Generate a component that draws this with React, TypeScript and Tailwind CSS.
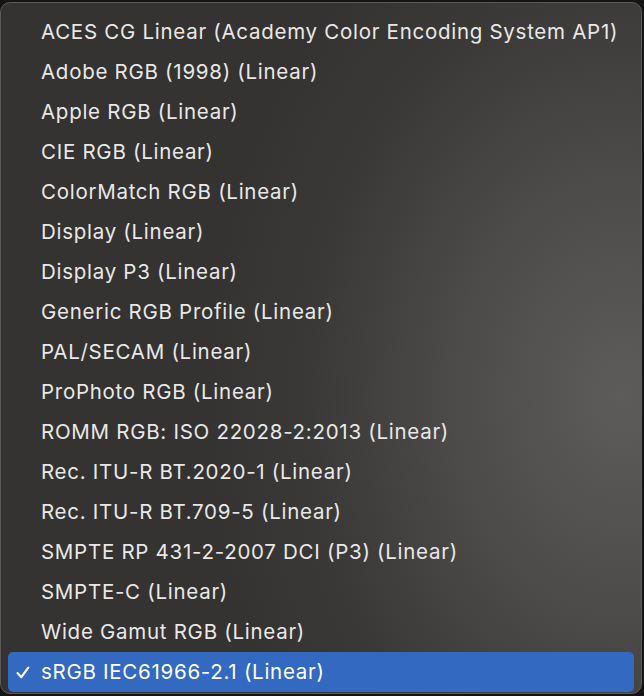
import React from "react";

const profiles = [
  "ACES CG Linear (Academy Color Encoding System AP1)",
  "Adobe RGB (1998) (Linear)",
  "Apple RGB (Linear)",
  "CIE RGB (Linear)",
  "ColorMatch RGB (Linear)",
  "Display (Linear)",
  "Display P3 (Linear)",
  "Generic RGB Profile (Linear)",
  "PAL/SECAM (Linear)",
  "ProPhoto RGB (Linear)",
  "ROMM RGB: ISO 22028-2:2013 (Linear)",
  "Rec. ITU-R BT.2020-1 (Linear)",
  "Rec. ITU-R BT.709-5 (Linear)",
  "SMPTE RP 431-2-2007 DCI (P3) (Linear)",
  "SMPTE-C (Linear)",
  "Wide Gamut RGB (Linear)",
  "sRGB IEC61966-2.1 (Linear)",
];

const selected = "sRGB IEC61966-2.1 (Linear)";

function Check() {
  return (
    <svg width="14" height="13" viewBox="0 0 14 13" fill="none">
      <path
        d="M1.5 7 L5.3 11.2 L12.3 1.6"
        stroke="#ffffff"
        strokeWidth="2.1"
        strokeLinecap="round"
        strokeLinejoin="round"
      />
    </svg>
  );
}

export default function App() {
  return (
    <div className="w-[644px] h-[696px] bg-[#141414] pt-[2px] pr-[2px] overflow-hidden">
      <div className="w-[642px] h-[692px] rounded-[10px] border border-[#5a5a5a] bg-[radial-gradient(ellipse_65%_80%_at_97%_57%,#5d5c5b_0%,#4c4b4a_40%,#3a3937_75%,#343331_100%)] pt-[9px] px-[7px] font-['Inter','Helvetica_Neue','Liberation_Sans',sans-serif] text-[20.5px] tracking-[0.72px] text-[#e9e8e7]">
        {profiles.map((p) => {
          const on = p === selected;
          return (
            <div
              key={p}
              className={
                on
                  ? "h-[40px] flex items-center rounded-[5px] bg-[#3369c0] text-white"
                  : "h-[40px] flex items-center"
              }
            >
              <div className="w-[33px] pl-[8px] flex items-center">
                {on ? <Check /> : null}
              </div>
              <span className="whitespace-nowrap">{p}</span>
            </div>
          );
        })}
      </div>
    </div>
  );
}
